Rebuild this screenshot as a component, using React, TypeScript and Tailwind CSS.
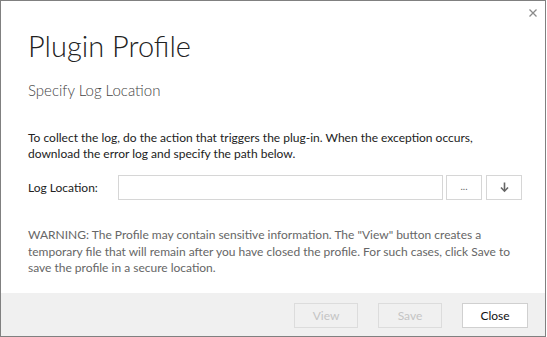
import React from "react";

export default function App() {
  return (
    <div
      className="relative w-[546px] h-[337px] border border-[#808080] bg-white flex flex-col text-black"
      style={{ fontFamily: '"Lato", "Open Sans", sans-serif' }}
    >
      <div className="absolute top-[7px] right-[7px] w-[10px] h-[10px]">
        <svg width="10" height="10" viewBox="0 0 10 10">
          <path d="M1.5 1.5 L8.5 8.5 M8.5 1.5 L1.5 8.5" stroke="#8a8a8a" strokeWidth="1.3" />
        </svg>
      </div>
      <div className="flex-1 px-[27px]">
        <div className="mt-[27px] text-[29px] leading-[36px] font-light text-[#222]">Plugin Profile</div>
        <div className="mt-[16px] text-[15px] leading-[20px] font-light text-[#444]">Specify Log Location</div>
        <div className="mt-[30px] text-[12px] leading-[16px] text-[#222]">
          To collect the log, do the action that triggers the plug-in. When the exception occurs,
          <br />
          download the error log and specify the path below.
        </div>
        <div className="mt-[13px] flex items-center h-[25px]">
          <div className="shrink-0 w-[90px] text-[12px] text-[#222]">Log Location:</div>
          <div className="shrink-0 w-[325px] h-[25px] border border-[#d6d6d6]"></div>
          <div className="shrink-0 ml-[3px] w-[36px] h-[25px] border border-[#d6d6d6] flex items-center justify-center text-[10px] text-[#666] pb-[2px]">
            ...
          </div>
          <div className="shrink-0 ml-[4px] w-[36px] h-[25px] border border-[#d6d6d6] flex items-center justify-center">
            <svg width="9" height="11" viewBox="0 0 9 11">
              <path d="M4.5 0.5 V9" stroke="#666" strokeWidth="1.6" />
              <path d="M1 5.5 L4.5 9.2 L8 5.5" stroke="#666" strokeWidth="1.6" fill="none" />
            </svg>
          </div>
        </div>
        <div className="mt-[27px] text-[12px] leading-[16.5px] text-[#666]">
          WARNING: The Profile may contain sensitive information. The "View" button creates a
          <br />
          temporary file that will remain after you have closed the profile. For such cases, click Save to
          <br />
          save the profile in a secure location.
        </div>
      </div>
      <div className="h-[43px] bg-[#f0f0f0] flex items-start justify-end pt-[10px] pr-[17px] gap-[20px]">
        <div className="w-[64px] h-[25px] border border-[#dcdcdc] flex items-center justify-center text-[12px] text-[#c4c4c4]">View</div>
        <div className="w-[64px] h-[25px] border border-[#dcdcdc] flex items-center justify-center text-[12px] text-[#c4c4c4]">Save</div>
        <div className="w-[66px] h-[25px] border border-[#d0d0d0] bg-white flex items-center justify-center text-[12px] text-[#111]">Close</div>
      </div>
    </div>
  );
}
